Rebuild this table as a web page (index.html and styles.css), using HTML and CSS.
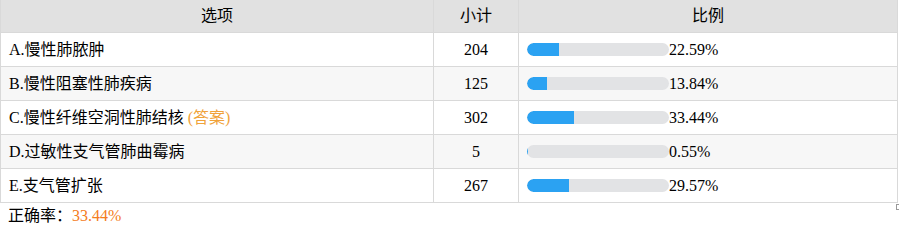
FILE: index.html
```html
<!DOCTYPE html>
<html>
<head>
<meta charset="utf-8">
<link rel="stylesheet" href="styles.css">
</head>
<body>
<div class="wrap">
<table class="stats">
  <thead>
    <tr><th class="c-opt">选项</th><th class="c-cnt">小计</th><th class="c-pct">比例</th></tr>
  </thead>
  <tbody>
    <tr><td>A.慢性肺脓肿</td><td class="num">204</td><td><div class="pct"><div class="bar"><div class="fill" style="width:22.59%"></div></div><span>22.59%</span></div></td></tr>
    <tr class="alt"><td>B.慢性阻塞性肺疾病</td><td class="num">125</td><td><div class="pct"><div class="bar"><div class="fill" style="width:13.84%"></div></div><span>13.84%</span></div></td></tr>
    <tr><td>C.慢性纤维空洞性肺结核 <span class="ans">(答案)</span></td><td class="num">302</td><td><div class="pct"><div class="bar"><div class="fill" style="width:33.44%"></div></div><span>33.44%</span></div></td></tr>
    <tr class="alt"><td>D.过敏性支气管肺曲霉病</td><td class="num">5</td><td><div class="pct"><div class="bar"><div class="fill" style="width:0.55%"></div></div><span>0.55%</span></div></td></tr>
    <tr><td>E.支气管扩张</td><td class="num">267</td><td><div class="pct"><div class="bar"><div class="fill" style="width:29.57%"></div></div><span>29.57%</span></div></td></tr>
  </tbody>
</table>
<span class="handle"></span>
</div>
<div class="rate">正确率：<span class="rate-val">33.44%</span></div>
</body>
</html>
```
FILE: styles.css
```css
html, body {
  margin: 0;
  padding: 0;
  background: #fff;
}
body {
  font-family: "Liberation Serif", "Noto Sans CJK SC", serif;
  font-size: 16px;
  color: #000;
}
.wrap {
  position: relative;
  width: 898px;
}
.stats {
  border-collapse: collapse;
  width: 898px;
  table-layout: fixed;
}
.stats th, .stats td {
  border: 1px solid #d9d9d9;
  padding: 0 8px;
  line-height: 20px;
  text-align: left;
  white-space: nowrap;
}
.stats th {
  background: #e1e1e1;
  font-weight: normal;
  text-align: center;
  height: 32px;
  border-top: none;
}
.stats td {
  height: 33px;
}
.c-opt { width: 416px; }
.c-cnt { width: 68px; }
.stats td.num { text-align: center; }
.alt td { background: #f7f7f7; }
.ans { color: #f0a23a; }
.pct {
  display: flex;
  align-items: center;
}
.bar {
  width: 142px;
  height: 13px;
  border-radius: 7px;
  background: #e2e3e5;
  overflow: hidden;
  flex: none;
}
.fill {
  height: 100%;
  background: #2ba2f2;
  border-radius: 7px 0 0 7px;
}
.handle {
  position: absolute;
  right: -1px;
  bottom: -7px;
  width: 2px;
  height: 4px;
  border: 1px solid #999;
  border-right: none;
}
.rate {
  padding: 3px 8px 0;
  line-height: 20px;
}
.rate-val { color: #f47c20; }
```
